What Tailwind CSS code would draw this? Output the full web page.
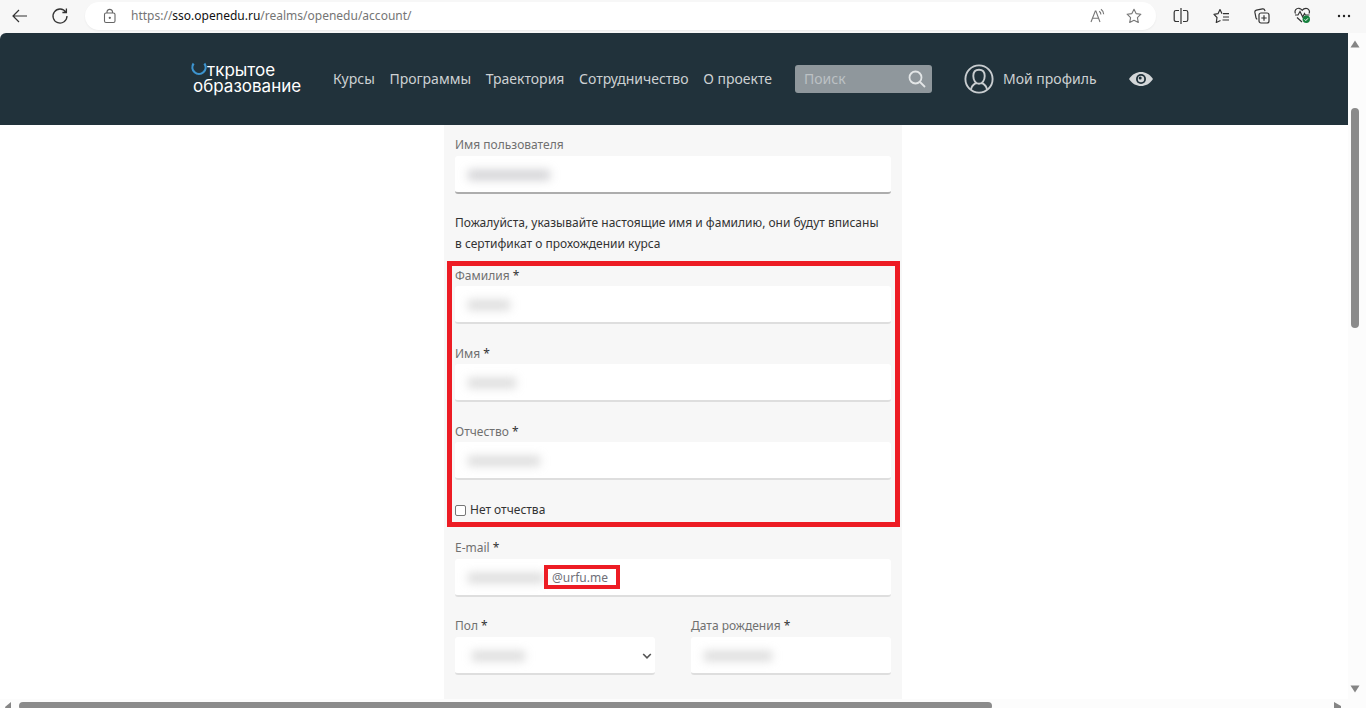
<!DOCTYPE html>
<html lang="ru">
<head>
<meta charset="utf-8">
<title>Открытое образование</title>
<script src="https://cdn.jsdelivr.net/npm/@tailwindcss/browser@4"></script>
</head>
<body class="h-screen overflow-hidden flex flex-col bg-[#f7f7f7] font-['Noto_Sans',sans-serif] text-[12px] text-[#333]">

<!-- Browser toolbar -->
<div class="h-[33px] shrink-0 flex items-center pb-[2px] pl-[11px] pr-[15px]">
  <button aria-label="Назад" class="w-[18px] mr-[22px]"><svg class="w-[18px] h-[18px]" viewBox="0 0 18 18" fill="none" stroke="#333" stroke-width="1.2"><path d="M16 9H2M8 3L2 9l6 6"/></svg></button>
  <button aria-label="Обновить" class="w-[18px] mr-[16px]"><svg class="w-[18px] h-[18px]" viewBox="0 0 18 18" fill="none" stroke="#333" stroke-width="1.3"><path d="M14.8 5.1A7 7 0 1 0 16 9M15.4 1.6v3.9h-4"/></svg></button>
  <div class="flex-1 h-[28px] rounded-full bg-white shadow-xs flex items-center pl-[18px] pr-[14px] mr-[17px]">
    <svg class="w-[14px] h-[16px] mr-[14px]" viewBox="0 0 14 16" fill="none" stroke="#666" stroke-width="1.1"><rect x="1.5" y="5" width="10.5" height="9.5" rx="1.5"/><path d="M4 5V3.6a2.8 2.8 0 0 1 5.5 0V5"/><circle cx="6.8" cy="9.8" r=".6" fill="#555"/></svg>
    <div class="flex-1 text-[#757575] whitespace-nowrap">https://<span class="text-[#111]">sso.openedu.ru</span>/realms/openedu/account/</div>
    <button aria-label="Читать вслух" class="mr-[20px]"><svg class="w-[16px] h-[16px]" viewBox="0 0 16 16" fill="none" stroke="#777" stroke-width="1.1"><path d="M1 14L5.3 3h.6L10 14M2.6 10.3h6M9.2 3.2a4 4 0 0 1 1.700 3.300M11 1.200a6.500 6.500 0 0 1 2.700 5"/></svg></button>
    <button aria-label="В избранное"><svg class="w-[16px] h-[16px]" viewBox="0 0 16 16" fill="none" stroke="#777" stroke-width="1.1" stroke-linejoin="round"><path d="M8 1.200l2.100 4.400 4.800.6-3.500 3.400.9 4.900L8 12.200l-4.300 2.300.9-4.900L1.100 6.200l4.800-.6z"/></svg></button>
  </div>
  <div class="flex items-center gap-[24px]">
    <button aria-label="Разделить экран"><svg class="w-[16px] h-[16px]" viewBox="0 0 16 16" fill="none" stroke="#333" stroke-width="1.2"><path d="M8 0v16M6 2.500H3A1.800 1.800 0 0 0 1.200 4.300v7.400A1.800 1.800 0 0 0 3 13.500h3M10 2.500h3a1.800 1.800 0 0 1 1.800 1.800v7.400a1.800 1.800 0 0 1-1.800 1.800h-3"/></svg></button>
    <button aria-label="Избранное"><svg class="w-[17px] h-[16px]" viewBox="0 0 17 16" fill="none" stroke="#333" stroke-width="1.2" stroke-linejoin="round"><path d="M10 5.700H16M9 5.700L7 1.500 5 5.700l-4 .6 3 3.200-.7 5L7.500 12.500M10 9h6M9.500 12h6.500"/></svg></button>
    <button aria-label="Коллекции"><svg class="w-[16px] h-[16px]" viewBox="0 0 16 16" fill="none" stroke="#333" stroke-width="1.2"><rect x="5" y="5" width="10" height="10" rx="2"/><path d="M10 7.300v5.400M7.300 10h5.400M3.300 11.200A2 2 0 0 1 2 9.800L.9 4.400a2 2 0 0 1 1.500-2.300L8.500.9a2 2 0 0 1 2.300 1.500l.2.800"/></svg></button>
    <button aria-label="Производительность"><svg class="w-[17px] h-[17px]" viewBox="0 0 17 17" fill="none" stroke="#333" stroke-width="1.200"><path d="M1.500 6.500C0 3.500 2.500 1 5 1.300c1.500.2 2.500 1 3.300 2C9 2.200 10.300 1.300 12 1.300c2.500 0 4.300 2.700 3 5.200M1 8h3l2-3.500 2.700 5.500 1.800-3.500.8 1.500H15.500M3 10.500l5 4.500"/><circle cx="12.300" cy="12.300" r="3.700" fill="#15803d" stroke="none"/><path d="M10.600 12.400l1.200 1.200 2.200-2.300" stroke="#fff" stroke-width="1"/></svg></button>
    <button aria-label="Меню" class="ml-[2px]"><svg class="w-[14px] h-[4px]" viewBox="0 0 14 4" fill="#222"><circle cx="2" cy="2" r="1.200"/><circle cx="7" cy="2" r="1.200"/><circle cx="12" cy="2" r="1.200"/></svg></button>
  </div>
</div>

<div class="flex-1 min-h-0 flex">
  <div class="flex-1 min-w-0 flex flex-col bg-white rounded-tl-md overflow-hidden">
    <header class="h-[92px] shrink-0 bg-[#21323b] text-[#cdd1d3] pr-[4px]">
      <div class="h-full w-[962px] mx-auto flex items-center pb-px text-[14px] whitespace-nowrap">
        <a href="#" class="w-[142px] shrink-0 flex flex-col text-[17px] leading-[16px] text-white font-[Inter,sans-serif] pb-[2px]">
          <span class="flex"><svg class="w-[16px] h-[16px]" viewBox="0 0 16 16" fill="none" stroke="#3d94cf" stroke-width="2.200"><path d="M2.600 1.500A6.600 6.600 0 1 0 13.400 1.500"/></svg>ткрытое</span>
          <span class="pl-[2px]">образование</span>
        </a>
        <nav class="flex w-[462px] shrink-0 justify-between pr-[23px]">
          <a href="#">Курсы</a><a href="#">Программы</a><a href="#">Траектория</a><a href="#">Сотрудничество</a><a href="#">О проекте</a>
        </nav>
        <form class="w-[137px] h-[28px] shrink-0 flex items-center rounded-[3px] bg-[#8f979c] pl-[9px] pr-[6px]">
          <input aria-label="Поиск" placeholder="Поиск" class="min-w-0 flex-1 bg-transparent outline-none placeholder:text-[#bcc1c4]">
          <button type="button" aria-label="Найти"><svg class="w-[18px] h-[18px] block" viewBox="0 0 18 18" fill="none" stroke="#e3e6e7" stroke-width="1.800"><circle cx="7.500" cy="7.500" r="6"/><path d="M12 12l5 5"/></svg></button>
        </form>
        <a href="#" class="ml-[32px] flex items-center gap-[9px]"><svg class="w-[30px] h-[30px]" viewBox="0 0 30 30" fill="none" stroke="#c9cdd0" stroke-width="1.900"><circle cx="15" cy="15" r="13.600"/><path d="M15 5.800c3.500 0 5.700 2.500 5.700 6.300 0 4-2.300 7.700-5.700 7.700s-5.700-3.700-5.700-7.700c0-3.800 2.200-6.300 5.700-6.300zM7 25.800c.3-4 2.300-5.500 5.300-7M23 25.800c-.3-4-2.300-5.500-5.300-7"/></svg>Мой профиль</a>
        <button aria-label="Версия для слабовидящих" class="ml-auto"><svg class="w-[24px] h-[16px] block" viewBox="0 0 24 16"><path d="M0 8C3.500 3 7.500 1 12 1s8.500 2 12 7c-3.500 5-7.500 7-12 7S3.500 13 0 8z" fill="#d3d6d8"/><circle cx="12" cy="8" r="5" fill="#21323b"/><circle cx="12" cy="8" r="3.200" fill="#d3d6d8"/><circle cx="11.200" cy="7" r="1.500" fill="#21323b"/></svg></button>
      </div>
    </header>

    <main class="flex-1 min-h-0 flex justify-center pr-[2px] overflow-hidden">
      <form class="w-[458px] h-full bg-[#f7f7f7] px-[11px] pt-[9px] text-[#707070]">
        <label for="user" class="block leading-[22px]">Имя пользователя</label>
        <div class="relative">
          <input id="user" class="block w-full h-[38px] px-3 rounded-[3px] bg-white border-b-2 border-[#adadad]">
          <span class="absolute left-[13px] top-[14px] w-[82px] h-[10px] bg-[#9a9aa0]/45 blur-[5px]"></span>
        </div>
        <p class="mt-[18px] leading-[21px] text-[#333]">Пожалуйста, указывайте настоящие имя и фамилию, они будут вписаны<br>в сертификат о прохождении курса</p>

        <div class="-ml-[8px] -mr-[9px] mt-[7px] h-[266px] border-[5px] border-[#ed1c24] pl-[3px] pr-[4px]">
          <label for="last" class="block leading-[20px]">Фамилия <span class="text-[#333]">*</span></label>
          <div class="relative mb-[20px]">
            <input id="last" class="block w-full h-[38px] px-3 rounded-[3px] bg-white border-b-2 border-[#dedede]">
            <span class="absolute left-[13px] top-[14px] w-[42px] h-[10px] bg-[#a5a5a5]/40 blur-[5px]"></span>
          </div>
          <label for="first" class="block leading-[20px]">Имя <span class="text-[#333]">*</span></label>
          <div class="relative mb-[20px]">
            <input id="first" class="block w-full h-[38px] px-3 rounded-[3px] bg-white border-b-2 border-[#dedede]">
            <span class="absolute left-[13px] top-[14px] w-[48px] h-[10px] bg-[#a5a5a5]/40 blur-[5px]"></span>
          </div>
          <label for="middle" class="block leading-[20px]">Отчество <span class="text-[#333]">*</span></label>
          <div class="relative mb-[20px]">
            <input id="middle" class="block w-full h-[38px] px-3 rounded-[3px] bg-white border-b-2 border-[#dedede]">
            <span class="absolute left-[13px] top-[14px] w-[72px] h-[10px] bg-[#a5a5a5]/40 blur-[5px]"></span>
          </div>
          <label class="flex items-center gap-[4px] leading-[20px] text-[#333]"><input type="checkbox" class="appearance-none w-[11px] h-[11px] rounded-[2px] border border-[#767676] bg-white">Нет отчества</label>
        </div>

        <label for="mail" class="block mt-[10px] leading-[22px]">E-mail <span class="text-[#333]">*</span></label>
        <div class="relative">
          <input id="mail" type="text" value="@urfu.me" class="block w-full h-[38px] pl-[97px] rounded-[3px] bg-white border-b-2 border-[#dedede] text-[#707078]">
          <span class="absolute left-[13px] top-[14px] w-[76px] h-[10px] bg-[#a5a5a5]/40 blur-[5px]"></span>
          <span class="absolute left-[89px] top-[6px] w-[76px] h-[24px] border-[4px] border-[#ed1c24]"></span>
        </div>

        <div class="mt-[18px] grid grid-cols-2 gap-[36px]">
          <div>
            <label for="sex" class="block leading-[22px]">Пол <span class="text-[#333]">*</span></label>
            <div class="relative">
              <select id="sex" class="block appearance-none w-full h-[38px] px-3 rounded-[3px] bg-white border-b-2 border-[#dedede]"></select>
              <span class="absolute left-[17px] top-[14px] w-[53px] h-[10px] bg-[#a5a5a5]/40 blur-[5px]"></span>
              <svg class="absolute right-[3px] top-[15px] w-[10px] h-[8px]" viewBox="0 0 10 8" fill="none" stroke="#555" stroke-width="1.600"><path d="M1.200 2L5 5.800 8.800 2"/></svg>
            </div>
          </div>
          <div>
            <label for="birth" class="block leading-[22px]">Дата рождения <span class="text-[#333]">*</span></label>
            <div class="relative">
              <input id="birth" class="block w-full h-[38px] px-3 rounded-[3px] bg-white border-b-2 border-[#dedede]">
              <span class="absolute left-[13px] top-[14px] w-[68px] h-[10px] bg-[#a5a5a5]/40 blur-[5px]"></span>
            </div>
          </div>
        </div>
      </form>
    </main>

    <!-- Horizontal scrollbar -->
    <div class="h-[9px] shrink-0 flex items-start bg-[#fcfcfc] pl-[5px] pr-[7px] pt-[3px]">
      <svg class="w-[7px] h-[8px] shrink-0" viewBox="0 0 7 8"><path d="M0 5L6 0v8H1z" fill="#858585"/></svg>
      <div class="flex-1 pl-[7px]"><div class="w-[74%] h-[8px] rounded-[4px] bg-[#8b8b8b]"></div></div>
      <svg class="w-[7px] h-[8px] shrink-0" viewBox="0 0 7 8"><path d="M0 0l7 4v4H0z" fill="#858585"/></svg>
    </div>
  </div>

  <!-- Vertical scrollbar -->
  <div class="w-[18px] flex flex-col bg-[#fcfcfc] pl-[2px] pt-[7px] pb-[15px]">
    <svg class="w-[10px] h-[8px]" viewBox="0 0 10 8"><path d="M5 .5L9.500 7.500H.5z" fill="#858585"/></svg>
    <div class="flex-1 pt-[60px]"><div class="w-[8px] h-[220px] ml-px rounded-[4px] bg-[#8b8b8b]"></div></div>
    <svg class="w-[10px] h-[8px]" viewBox="0 0 10 8"><path d="M5 7.500L9.500 .5H.5z" fill="#858585"/></svg>
  </div>
</div>
</body>
</html>
